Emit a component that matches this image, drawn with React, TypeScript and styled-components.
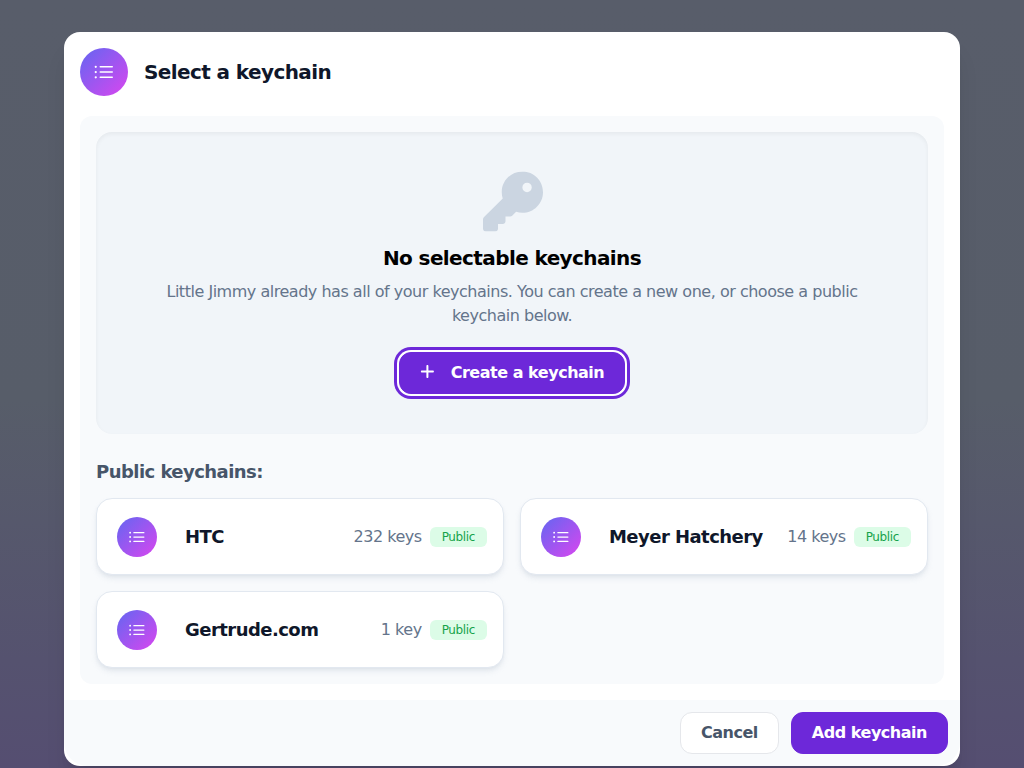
import React from 'react';
import styled, { createGlobalStyle } from 'styled-components';
import { FaKey, FaPlus } from 'react-icons/fa6';
import { HiOutlineListBullet } from 'react-icons/hi2';

const GlobalStyle = createGlobalStyle`
  *, *::before, *::after { box-sizing: border-box; }
  html, body { margin: 0; height: 100%; overflow: hidden; }
  body {
    font-family: "DejaVu Sans", sans-serif;
    font-size: 16px;
    line-height: 24px;
    color: #000;
  }
  h1, h2, h3, p { margin: 0; }
  button { font: inherit; letter-spacing: inherit; }
`;

const Backdrop = styled.div`
  height: 100vh;
  padding: 32px 64px 2px;
  overflow: hidden;
  background: linear-gradient(to bottom, #585d6a 0%, #575d69 52%, #56586c 68%, #55526f 86%, #554e71 100%);
`;

const Modal = styled.section`
  display: flex;
  flex-direction: column;
  height: 734px;
  border-radius: 16px;
  background: #fff;
  box-shadow: 0 20px 25px -5px rgba(0, 0, 0, 0.1), 0 8px 10px -6px rgba(0, 0, 0, 0.1);
`;

const Header = styled.header`
  display: flex;
  align-items: center;
  gap: 16px;
  padding: 16px 16px 20px;
`;

const Title = styled.h1`
  font-size: 20px;
  line-height: 28px;
  font-weight: 700;
  letter-spacing: -0.03em;
  color: #0f172a;
`;

const GradientIcon = styled.div<{ $size: number }>`
  display: flex;
  flex-shrink: 0;
  align-items: center;
  justify-content: center;
  width: ${({ $size }) => $size}px;
  height: ${({ $size }) => $size}px;
  border-radius: 50%;
  color: #fff;
  font-size: ${({ $size }) => $size / 2}px;
  background: linear-gradient(to bottom right, #6366f1, #d946ef);
`;

const Panel = styled.main`
  flex: 1;
  margin: 0 16px 16px;
  padding: 16px;
  border-radius: 12px;
  background: #f8fafc;
`;

const EmptyState = styled.div`
  display: flex;
  flex-direction: column;
  align-items: center;
  padding: 40px;
  border-radius: 16px;
  background: #f1f5f9;
  box-shadow: inset 0 2px 4px rgba(0, 0, 0, 0.05);
`;

const KeyIcon = styled(FaKey)`
  width: 60px;
  height: 60px;
  margin: 0 0 12px 2px;
  transform: translateY(-0.5px);
  color: #cbd5e1;
`;

const EmptyTitle = styled.h2`
  font-size: 20px;
  line-height: 28px;
  font-weight: 700;
  letter-spacing: -0.03em;
`;

const EmptyText = styled.p`
  margin: 8px 0 24px;
  text-align: center;
  letter-spacing: -0.03em;
  color: #64748b;
`;

const Button = styled.button<{ $variant: 'primary' | 'outline'; $focused?: boolean }>`
  display: flex;
  align-items: center;
  height: 42px;
  padding: 0 20px;
  border-radius: 12px;
  border: 1px solid ${({ $variant }) => ($variant === 'primary' ? '#6d28d9' : '#e5e7eb')};
  background: ${({ $variant }) => ($variant === 'primary' ? '#6d28d9' : '#fff')};
  color: ${({ $variant }) => ($variant === 'primary' ? '#fff' : '#475569')};
  font-weight: 700;
  letter-spacing: -0.03em;
  white-space: nowrap;
  box-shadow: ${({ $focused }) => ($focused ? '0 0 0 2px #fff, 0 0 0 5px #6d28d9' : 'none')};
`;

const PlusIcon = styled(FaPlus)`
  width: 16px;
  height: 16px;
  margin-right: 15px;
  transform: translate(-0.6px, -1.5px);
`;

const SectionTitle = styled.h2`
  margin: 24px 0 12px;
  font-size: 18px;
  line-height: 28px;
  font-weight: 700;
  letter-spacing: -0.03em;
  color: #475569;
`;

const KeychainGrid = styled.div`
  display: grid;
  grid-template-columns: 1fr 1fr;
  grid-auto-rows: 77px;
  gap: 16px;
`;

const Card = styled.article`
  display: flex;
  align-items: center;
  padding: 1px 16px 0 20px;
  border: 1px solid #e2e8f0;
  border-radius: 16px;
  background: #fff;
  box-shadow: 0 4px 6px -1px rgba(148, 163, 184, 0.2), 0 2px 4px -2px rgba(148, 163, 184, 0.2);
`;

const CardName = styled.h3`
  flex: 1;
  margin-left: 28px;
  font-size: 18px;
  line-height: 28px;
  font-weight: 700;
  letter-spacing: -0.03em;
  color: #0f172a;
`;

const KeyCount = styled.span`
  margin-right: 8px;
  letter-spacing: -0.03em;
  color: #64748b;
`;

const Badge = styled.span`
  padding: 0 12px;
  border-radius: 6px;
  font-size: 12px;
  line-height: 20px;
  letter-spacing: -0.03em;
  color: #16a34a;
  background: #dcfce7;
`;

const Footer = styled.footer`
  display: flex;
  justify-content: flex-end;
  gap: 12px;
  padding: 12px;
  border-radius: 0 0 24px 24px;
  background: #f8fafc;
`;

const keychains = [
  { name: 'HTC', keys: 232 },
  { name: 'Meyer Hatchery', keys: 14 },
  { name: 'Gertrude.com', keys: 1 },
];

export default function App() {
  return (
    <>
      <GlobalStyle />
      <Backdrop>
        <Modal>
          <Header>
            <GradientIcon $size={48}>
              <HiOutlineListBullet />
            </GradientIcon>
            <Title>Select a keychain</Title>
          </Header>
          <Panel>
            <EmptyState>
              <KeyIcon />
              <EmptyTitle>No selectable keychains</EmptyTitle>
              <EmptyText>
                Little Jimmy already has all of your keychains. You can create a new one, or choose a
                public keychain below.
              </EmptyText>
              <Button $variant="primary" $focused>
                <PlusIcon />
                Create a keychain
              </Button>
            </EmptyState>
            <SectionTitle>Public keychains:</SectionTitle>
            <KeychainGrid>
              {keychains.map(({ name, keys }) => (
                <Card key={name}>
                  <GradientIcon $size={40}>
                    <HiOutlineListBullet />
                  </GradientIcon>
                  <CardName>{name}</CardName>
                  <KeyCount>{`${keys} ${keys === 1 ? 'key' : 'keys'}`}</KeyCount>
                  <Badge>Public</Badge>
                </Card>
              ))}
            </KeychainGrid>
          </Panel>
          <Footer>
            <Button $variant="outline">Cancel</Button>
            <Button $variant="primary">Add keychain</Button>
          </Footer>
        </Modal>
      </Backdrop>
    </>
  );
}
